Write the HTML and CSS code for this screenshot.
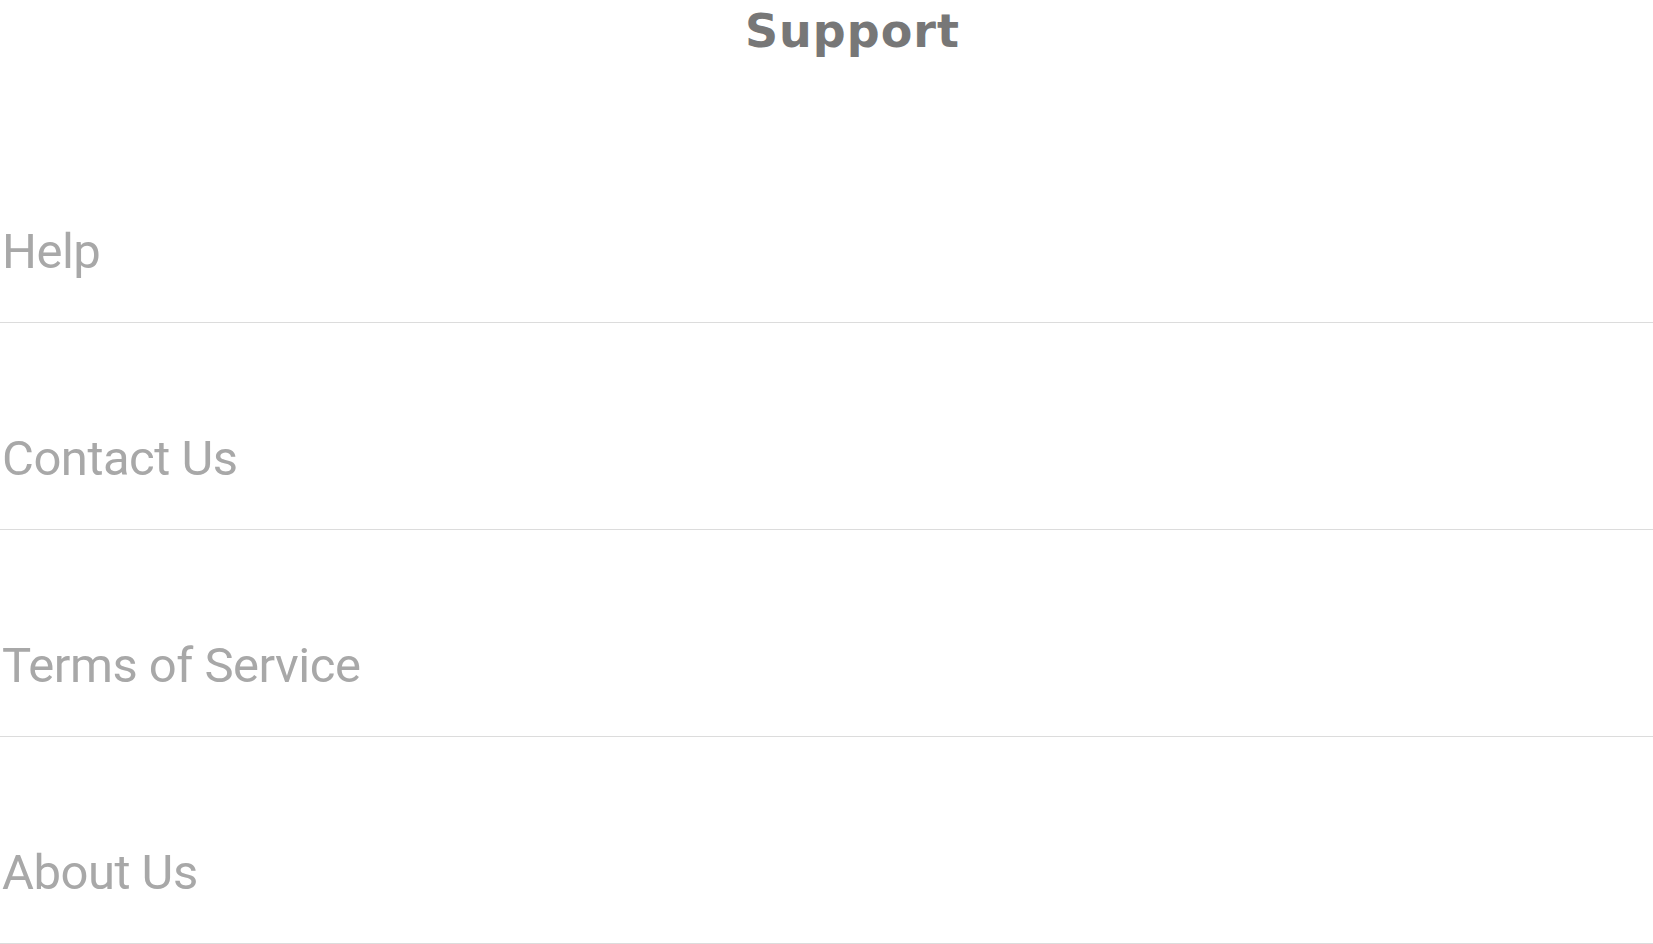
FILE: index.html
```html
<!DOCTYPE html>
<html lang="en">
<head>
<meta charset="utf-8">
<title>Support</title>
<link rel="stylesheet" href="styles.css">
</head>
<body>
<div class="page">
  <header class="header">
    <h1 class="title">Support</h1>
  </header>
  <ul class="menu">
    <li class="item">Help</li>
    <li class="item">Contact Us</li>
    <li class="item">Terms of Service</li>
    <li class="item">About Us</li>
  </ul>
</div>
</body>
</html>
```

FILE: styles.css
```css
html, body {
  margin: 0;
  padding: 0;
  background: #ffffff;
}
.page {
  width: 100%;
}
.header {
  height: 116px;
  display: flex;
  justify-content: center;
  padding-left: 52px;
  box-sizing: border-box;
}
.title {
  margin: 0;
  font-family: "DejaVu Sans", "Noto Sans", sans-serif;
  font-weight: 700;
  font-size: 46px;
  line-height: 1;
  letter-spacing: 1px;
  color: #777777;
  padding-top: 8px;
}
.menu {
  list-style: none;
  margin: 0;
  padding: 0;
}
.item {
  height: 160px;
  padding: 0 0 46px 2px;
  border-bottom: 1px solid #dcdcdc;
  display: flex;
  align-items: flex-end;
  font-family: Roboto, "Liberation Sans", sans-serif;
  font-size: 49px;
  letter-spacing: -0.5px;
  line-height: 1;
  color: #a8a8a8;
}
```
